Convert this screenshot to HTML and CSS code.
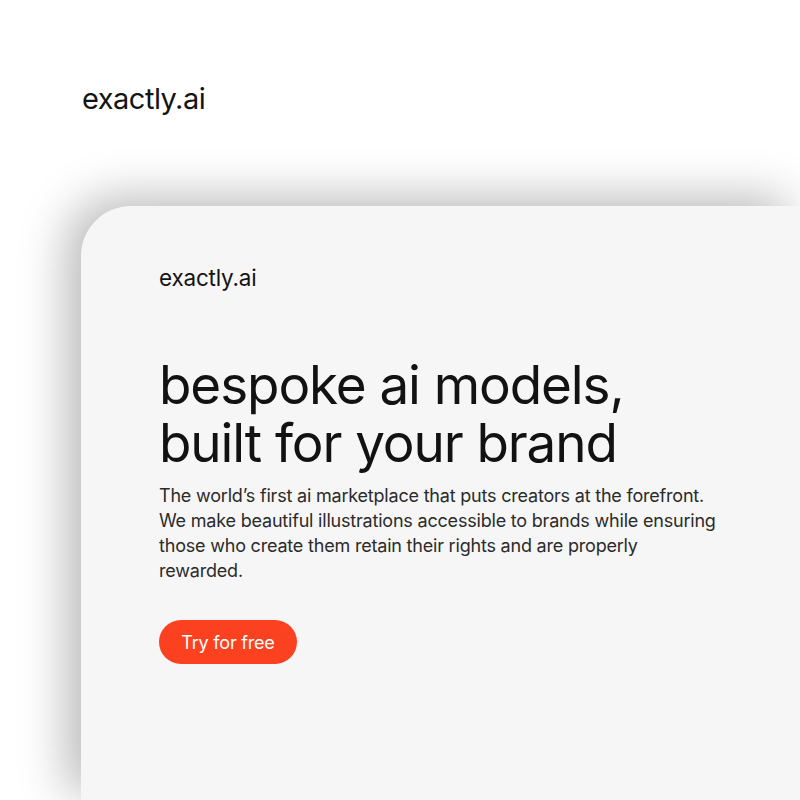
FILE: index.html
```html
<!DOCTYPE html>
<html lang="en">
<head>
<meta charset="utf-8">
<title>exactly.ai</title>
<link rel="stylesheet" href="styles.css">
</head>
<body>
<div class="page">
  <header class="top">
    <div class="logo">exactly.ai</div>
  </header>
  <section class="card">
    <div class="card-logo">exactly.ai</div>
    <h1 class="headline">bespoke ai models,<br>built for your brand</h1>
    <p class="lead">The world’s first ai marketplace that puts creators at the forefront. We make beautiful illustrations accessible to brands while ensuring those who create them retain their rights and are properly rewarded.</p>
    <a class="cta" href="#">Try for free</a>
  </section>
</div>
</body>
</html>
```
FILE: styles.css
```css
html, body {
  margin: 0;
  padding: 0;
  background: #ffffff;
  overflow: hidden;
  width: 800px;
  height: 800px;
}
body {
  font-family: Inter, "Liberation Sans", sans-serif;
  color: #111111;
}
.page {
  display: flex;
  flex-direction: column;
  height: 800px;
  overflow: hidden;
}
.top {
  padding: 82px 0 0 82px;
  height: 206px;
  flex: 0 0 206px;
  box-sizing: border-box;
}
.logo {
  font-size: 29px;
  line-height: 34px;
  letter-spacing: -0.5px;
  color: #141414;
}
.card {
  margin-left: 81px;
  width: 719px;
  flex: 1;
  background: #f6f6f6;
  border-radius: 50px 0 0 0;
  box-shadow: -14px -8px 48px rgba(0, 0, 0, 0.28);
  padding: 58px 0 0 78px;
  box-sizing: border-box;
}
.card-logo {
  font-size: 22.5px;
  line-height: 28px;
  letter-spacing: -0.2px;
  color: #141414;
}
.headline {
  margin: 64px 0 0 0;
  font-weight: 400;
  font-size: 53px;
  line-height: 58px;
  letter-spacing: -1.1px;
  color: #121212;
}
.lead {
  margin: 11px 0 0 0;
  width: 565px;
  font-size: 18px;
  line-height: 25px;
  color: #2b2b2b;
  letter-spacing: -0.2px;
}
.cta {
  display: inline-flex;
  align-items: center;
  justify-content: center;
  margin-top: 37px;
  width: 138px;
  height: 44px;
  border-radius: 22px;
  background: #fc4120;
  color: #ffffff;
  font-size: 18px;
  text-decoration: none;
  letter-spacing: -0.2px;
}
```
